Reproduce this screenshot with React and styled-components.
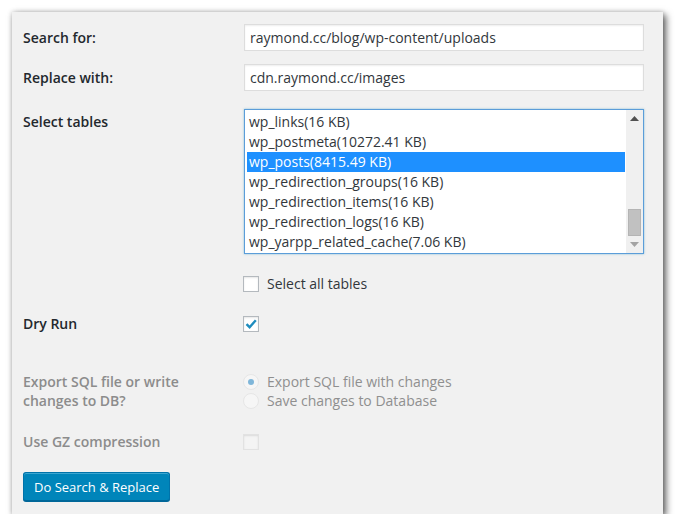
import React from "react";
import styled, { createGlobalStyle } from "styled-components";

const GlobalStyle = createGlobalStyle`
  body {
    margin: 0;
    background: #fff;
    font-family: "Open Sans", "Noto Sans", sans-serif;
  }
`;

const Panel = styled.div`
  margin: 12px 0 0 12px;
  width: 651px;
  box-sizing: border-box;
  padding: 12px 11px 13px;
  background: #f1f1f1;
  box-shadow: 3px 3px 7px rgba(0, 0, 0, 0.6), 0 0 5px rgba(0, 0, 0, 0.2);
`;

const Row = styled.div`
  display: flex;
  align-items: ${(p) => p.$align || "center"};
  margin-top: ${(p) => p.$top || 0}px;
`;

const Label = styled.div`
  width: 221px;
  flex: none;
  font-size: 14px;
  font-weight: 600;
  line-height: 19px;
  color: ${(p) => (p.$muted ? "#8c8c8c" : "#23282d")};
  padding-top: ${(p) => p.$pad || 0}px;
`;

const Field = styled.div`
  display: flex;
  flex-direction: column;
`;

const TextInput = styled.input`
  width: 400px;
  height: 27px;
  box-sizing: border-box;
  border: 1px solid #ddd;
  background: #fff;
  padding: 0 5px;
  font-family: inherit;
  font-size: 14px;
  color: #32373c;
  outline: none;
  box-shadow: inset 0 1px 2px rgba(0, 0, 0, 0.07);
`;

const ListBox = styled.div`
  width: 400px;
  height: 145px;
  box-sizing: border-box;
  border: 1px solid #5b9dd9;
  background: #fff;
  display: flex;
  box-shadow: 0 0 2px rgba(30, 140, 190, 0.5);
`;

const Options = styled.div`
  flex: 1;
  padding: 2px 0 0 2px;
`;

const Option = styled.div`
  height: 20px;
  line-height: 20px;
  padding-left: 2px;
  margin-right: 1px;
  font-size: 14px;
  color: ${(p) => (p.$selected ? "#fff" : "#32373c")};
  background: ${(p) => (p.$selected ? "#1e90ff" : "transparent")};
  white-space: nowrap;
`;

const ScrollTrack = styled.div`
  width: 17px;
  background: #f0f0f0;
  display: flex;
  flex-direction: column;
  align-items: center;
`;

const Arrow = styled.div`
  height: 17px;
  width: 17px;
  display: flex;
  align-items: center;
  justify-content: center;
`;

const Thumb = styled.div`
  width: 11px;
  height: 25px;
  background: #c1c1c1;
  border: 1px solid #b4b4b4;
  margin-top: auto;
`;

const Box = styled.span`
  width: 16px;
  height: 16px;
  box-sizing: border-box;
  flex: none;
  border: 1px solid ${(p) => (p.$disabled ? "#e2e2e2" : "#b4b9be")};
  background: ${(p) => (p.$disabled ? "#f4f4f4" : "#fff")};
  box-shadow: inset 0 1px 2px rgba(0, 0, 0, 0.1);
  display: flex;
  align-items: center;
  justify-content: center;
`;

const Radio = styled(Box)`
  border-radius: 50%;
  border-color: #e6e6e6;
  background: #f6f6f6;
  box-shadow: none;
`;

const Dot = styled.span`
  width: 6px;
  height: 6px;
  border-radius: 50%;
  background: #7fb6d9;
`;

const Choice = styled.label`
  display: flex;
  align-items: center;
  gap: 8px;
  font-size: 14px;
  line-height: 19px;
  color: ${(p) => (p.$muted ? "#8f8f8f" : "#32373c")};
  margin-left: -1px;
`;

const Button = styled.button`
  height: 29px;
  padding: 0 10px;
  border: 1px solid #0073aa;
  border-bottom-color: #006799;
  border-radius: 3px;
  background: #0085ba;
  color: #fff;
  font-family: inherit;
  font-size: 13px;
  box-shadow: inset 0 1px 0 rgba(120, 200, 230, 0.5), 0 1px 0 #006799;
`;

const tables = [
  "wp_links(16 KB)",
  "wp_postmeta(10272.41 KB)",
  "wp_posts(8415.49 KB)",
  "wp_redirection_groups(16 KB)",
  "wp_redirection_items(16 KB)",
  "wp_redirection_logs(16 KB)",
  "wp_yarpp_related_cache(7.06 KB)",
];

const Check = () => (
  <svg width="14" height="14" viewBox="0 0 14 14">
    <path d="M2.5 7.2 L5.6 10.2 L11.8 3.2" fill="none" stroke="#1e8cbe" strokeWidth="2.4" />
  </svg>
);

const App = () => {
  return (
    <>
      <GlobalStyle />
      <Panel>
        <Row>
          <Label>Search for:</Label>
          <TextInput defaultValue="raymond.cc/blog/wp-content/uploads" />
        </Row>
        <Row $top={13}>
          <Label>Replace with:</Label>
          <TextInput defaultValue="cdn.raymond.cc/images" />
        </Row>
        <Row $top={18} $align="flex-start">
          <Label $pad={3}>Select tables</Label>
          <ListBox>
            <Options>
              {tables.map((t, i) => (
                <Option key={t} $selected={i === 2}>
                  {t}
                </Option>
              ))}
            </Options>
            <ScrollTrack>
              <Arrow>
                <svg width="9" height="5" viewBox="0 0 9 5">
                  <path d="M0 5 L4.5 0 L9 5 Z" fill="#505050" />
                </svg>
              </Arrow>
              <Thumb />
              <Arrow>
                <svg width="9" height="5" viewBox="0 0 9 5">
                  <path d="M0 0 L4.5 5 L9 0 Z" fill="#a3a3a3" />
                </svg>
              </Arrow>
            </ScrollTrack>
          </ListBox>
        </Row>
        <Row $top={20}>
          <Label />
          <Choice>
            <Box />
            Select all tables
          </Choice>
        </Row>
        <Row $top={21}>
          <Label>Dry Run</Label>
          <Choice>
            <Box>
              <Check />
            </Box>
          </Choice>
        </Row>
        <Row $top={39} $align="flex-start">
          <Label $muted>
            Export SQL file or write
            <br />
            changes to DB?
          </Label>
          <Field>
            <Choice $muted>
              <Radio>
                <Dot />
              </Radio>
              Export SQL file with changes
            </Choice>
            <Choice $muted>
              <Radio />
              Save changes to Database
            </Choice>
          </Field>
        </Row>
        <Row $top={22}>
          <Label $muted>Use GZ compression</Label>
          <Choice>
            <Box $disabled />
          </Choice>
        </Row>
        <Row $top={21}>
          <Button>Do Search &amp; Replace</Button>
        </Row>
      </Panel>
    </>
  );
};

export default App;
